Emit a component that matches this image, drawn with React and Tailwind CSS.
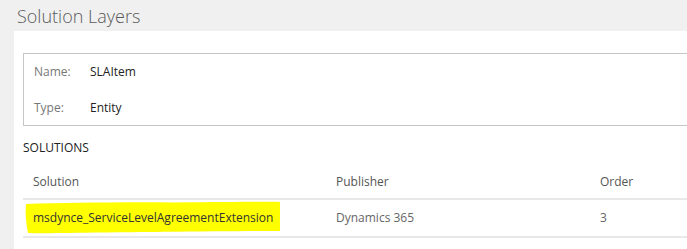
export default function App() {
  const font = { fontFamily: '"Open Sans", "Noto Sans", sans-serif' };
  return (
    <div className="w-[687px] h-[249px] bg-[#f0f0f0] flex flex-col overflow-hidden" style={font}>
      <div className="h-[31px] pl-[17px] flex items-start">
        <h1 className="text-[18px] leading-[24px] font-light text-[#5a5a5a] mt-[4px]">Solution Layers</h1>
      </div>
      <div className="flex-1 ml-[14px] bg-white pl-[9px] pt-[22px]">
        <div className="border border-[#c6c6c6] border-r-0 h-[73px] flex flex-col pl-[10px]">
          <div className="flex items-center h-[36px] pt-[1px]">
            <span className="w-[56px] text-[12px] text-[#777]">Name:</span>
            <span className="text-[12px] text-[#222]">SLAItem</span>
          </div>
          <div className="flex items-center h-[36px] pt-[1px]">
            <span className="w-[56px] text-[12px] text-[#777]">Type:</span>
            <span className="text-[12px] text-[#222]">Entity</span>
          </div>
        </div>
        <div className="h-[43px] flex items-center">
          <span className="text-[12px] text-[#222]">SOLUTIONS</span>
        </div>
        <div className="flex h-[31px] items-center pb-[3px] border-b-2 border-[#e8e8e8] text-[12px] text-[#555]">
          <div className="w-[303px] pl-[10px]">Solution</div>
          <div className="w-[264px] pl-[10px]">Publisher</div>
          <div className="flex-1 pl-[10px]">Order</div>
        </div>
        <div className="relative flex h-[38px] items-center border-b-2 border-[#e8e8e8] text-[12px]">
          <svg className="absolute left-[2px] top-[1px]" width="256" height="33" viewBox="0 0 256 33">
            <path d="M1 3 C40 2, 90 1, 150 1.5 C200 1, 235 0.5, 255 1 L255 30 C200 30, 130 31, 70 31.5 C35 32, 12 32.5, 3 32 C1 22, 0 12, 1 3 Z" fill="#ffff00" />
          </svg>
          <div className="w-[303px] pl-[10px] relative text-[#333]">msdynce_ServiceLevelAgreementExtension</div>
          <div className="w-[264px] pl-[10px] text-[#666]">Dynamics 365</div>
          <div className="flex-1 pl-[10px] text-[#666]">3</div>
        </div>
      </div>
    </div>
  );
}
